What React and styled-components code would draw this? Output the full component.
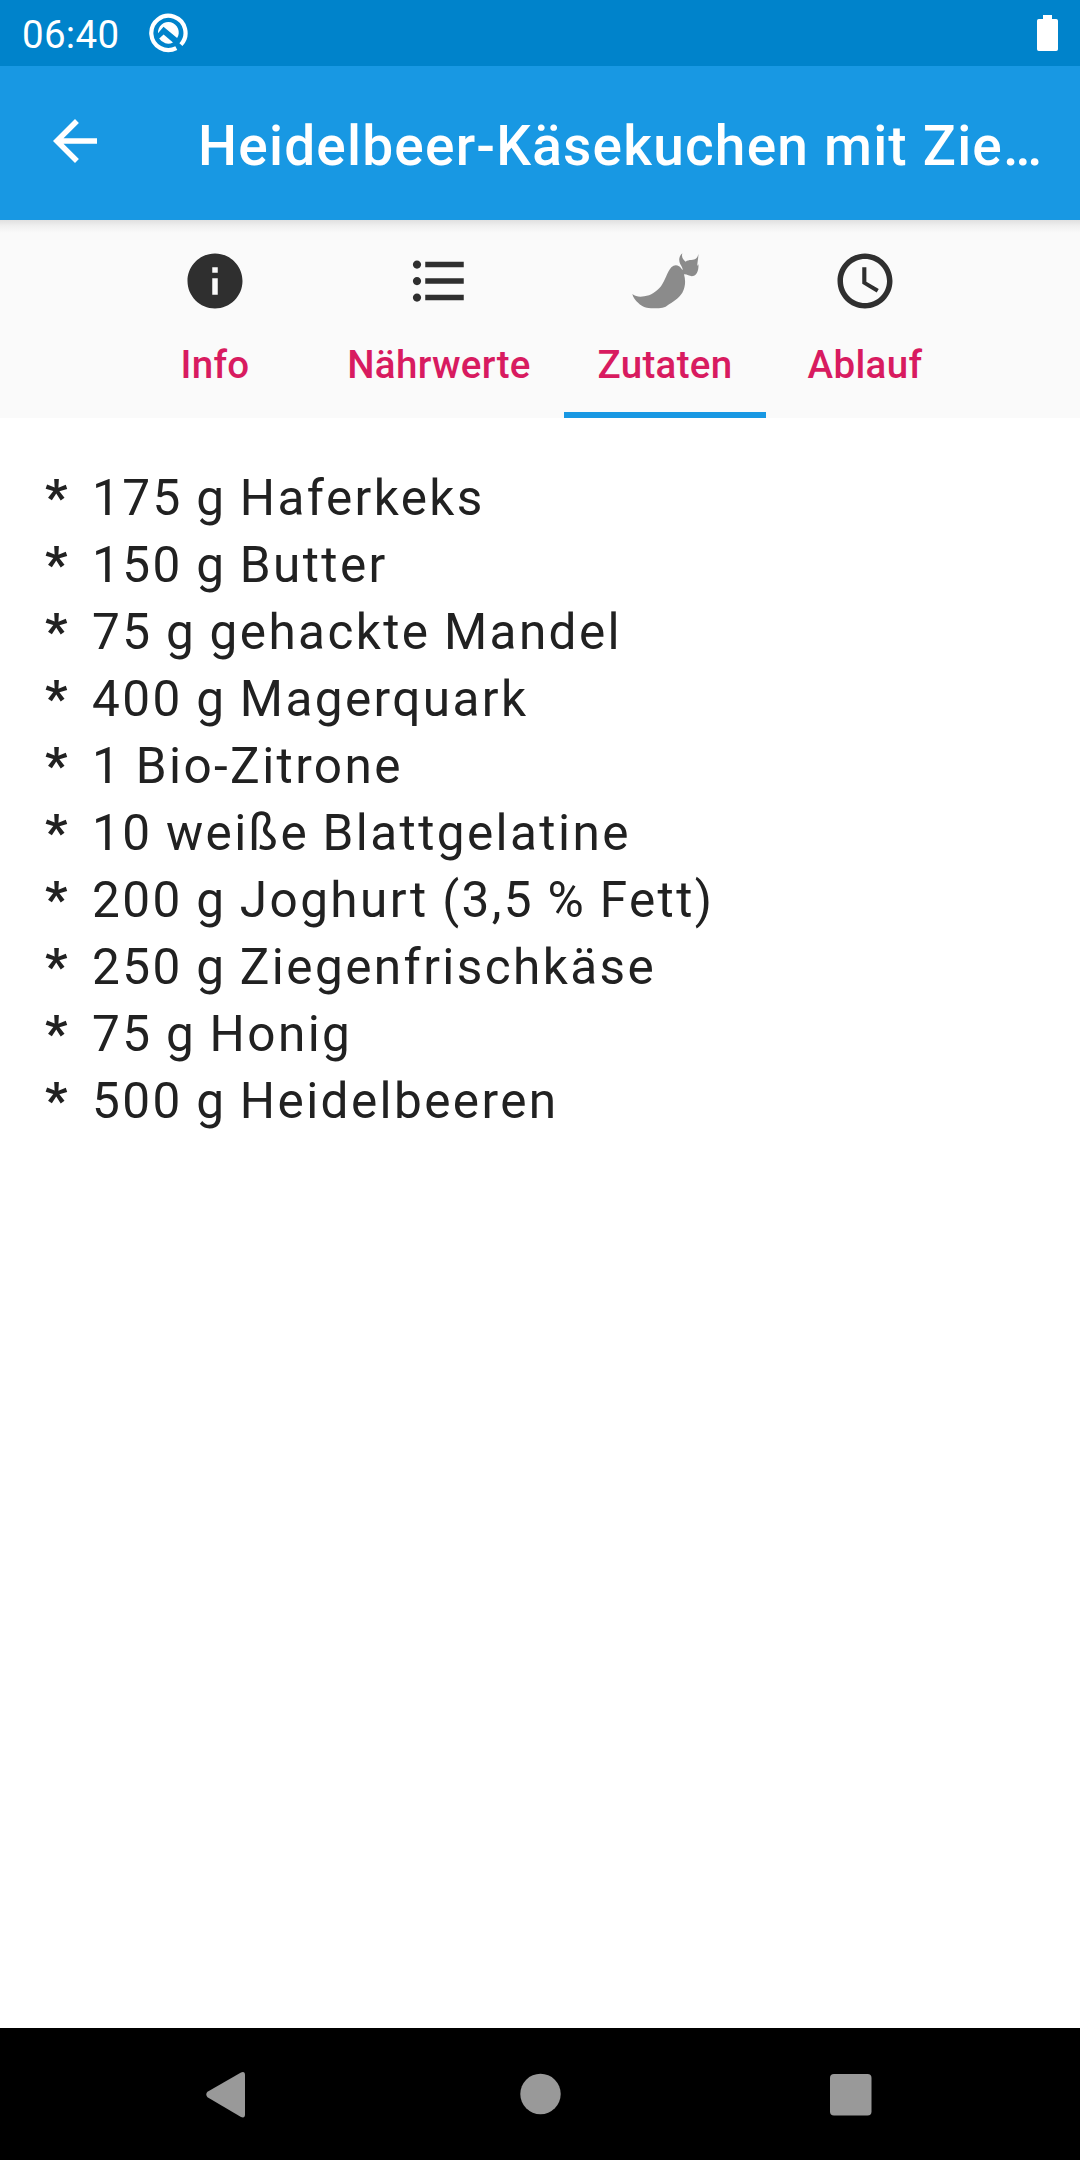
import React from "react";
import styled, { createGlobalStyle } from "styled-components";

const GlobalStyle = createGlobalStyle`
  * { box-sizing: border-box; }
  body { margin: 0; background: #fff; }
`;

const Screen = styled.div`
  display: flex;
  flex-direction: column;
  width: 1080px;
  height: 2160px;
  overflow: hidden;
  background: #fff;
  font-family: Roboto, "Noto Sans", sans-serif;
  color: #212121;
`;

const StatusBar = styled.header`
  display: flex;
  align-items: center;
  height: 66px;
  padding: 0 22px;
  background: #0083cb;
  color: #fff;
`;

const Clock = styled.span`
  width: 96px;
  font-size: 38.5px;
  line-height: 46px;
  letter-spacing: 0.3px;
  padding-top: 3px;
  margin-right: 30px;
  white-space: nowrap;
`;

const StatusSpacer = styled.div`
  flex: 1;
`;

const AppBar = styled.div`
  display: flex;
  align-items: center;
  height: 154px;
  padding: 0 32px 0 42px;
  background: #1898e3;
  color: #fff;
`;

const BackButton = styled.button`
  display: flex;
  padding: 0;
  margin: 0 90px 4px 0;
  border: 0;
  background: none;
  color: inherit;
`;

const Title = styled.h1`
  margin: 0;
  padding-top: 6px;
  font-size: 55px;
  font-weight: 500;
  line-height: 66px;
  letter-spacing: 1.21px;
  white-space: nowrap;
`;

const TabBar = styled.nav`
  display: flex;
  justify-content: center;
  height: 198px;
  background: linear-gradient(#e0e0e0, #f0f0f0 6px, #fafafa 13px);
`;

const Tab = styled.div`
  display: flex;
  flex-direction: column;
  align-items: center;
  width: ${(p) => p.$width}px;
  padding-top: 28px;
  border-bottom: 6px solid ${(p) => (p.$active ? "#1898e3" : "transparent")};
  color: #2f2f2f;
`;

const TabLabel = styled.span`
  margin-top: 28px;
  font-size: 38.5px;
  font-weight: 500;
  line-height: 46px;
  letter-spacing: 0.34px;
  color: #d81b60;
  white-space: nowrap;
`;

const PepperBox = styled.div`
  display: flex;
  align-items: center;
  justify-content: center;
  height: 66px;
  color: #8b8b8b;
`;

const Ingredients = styled.ul`
  flex: 1;
  margin: 0;
  padding: 47px 45px;
  list-style: none;
`;

const Ingredient = styled.li`
  display: flex;
  font-size: 49.5px;
  line-height: 67px;
  letter-spacing: 2.4px;
  word-spacing: -1.2px;
  white-space: nowrap;
`;

const Bullet = styled.span`
  width: 47px;
  font-weight: 700;
`;

const NavBar = styled.footer`
  display: flex;
  align-items: center;
  justify-content: space-between;
  height: 132px;
  padding: 0 196px 0 193px;
  background: #000;
  color: #999;
`;

const Icon = ({ children, size = 66, box = "0 0 24 24" }) => (
  <svg width={size} height={size} viewBox={box} fill="currentColor" display="block">
    {children}
  </svg>
);

const InfoIcon = () => (
  <Icon>
    <path d="M12 2C6.48 2 2 6.48 2 12s4.48 10 10 10 10-4.48 10-10S17.52 2 12 2zm1 15h-2v-6h2v6zm0-8h-2V7h2v2z" />
  </Icon>
);

const ListIcon = () => (
  <Icon>
    <path d="M4 10.5c-.83 0-1.5.67-1.5 1.5s.67 1.5 1.5 1.5 1.5-.67 1.5-1.5-.67-1.5-1.5-1.5zm0-6c-.83 0-1.5.67-1.5 1.5S3.17 7.5 4 7.5 5.5 6.83 5.5 6 4.83 4.5 4 4.5zm0 12c-.83 0-1.5.68-1.5 1.5s.68 1.5 1.5 1.5 1.5-.68 1.5-1.5-.67-1.5-1.5-1.5zM7 19h14v-2H7v2zm0-6h14v-2H7v2zm0-8v2h14V5H7z" />
  </Icon>
);

const PepperIcon = () => (
  <PepperBox>
    <svg width="67" height="56" viewBox="275 113 201 168" fill="currentColor">
      <path d="M276 236C286 244 298 246 312 243C332 241 348 229 362 213C374 197 380 171 393 156C400 149 409 148 416 153C421 156 424 161 427 165C427 158 424 153 420 147C414 136 416 121 426 114C423 125 427 132 436 139C445 132 461 136 468 129C471 126 473 121 474 116C475 127 470 144 471 152C472 150 473 148 474 147C476 162 470 178 461 181C450 186 442 176 431 177C436 194 436 215 426 232C415 250 397 259 380 271C370 279 354 279 338 279C320 279 306 275 294 263C285 255 278 246 276 236Z" />
    </svg>
  </PepperBox>
);

const ClockIcon = () => (
  <Icon>
    <path d="M11.99 2C6.47 2 2 6.48 2 12s4.47 10 9.99 10C17.52 22 22 17.52 22 12S17.52 2 11.99 2zM12 20c-4.42 0-8-3.58-8-8s3.58-8 8-8 8 3.58 8 8-3.58 8-8 8zm.5-13H11v6l5.25 3.15.75-1.23-4.5-2.67V7z" />
  </Icon>
);

const AndroidQIcon = () => (
  <Icon size={40} box="0 0 40 40">
    <path
      d="M32.9 31.6A17.1 17.1 0 1 0 28.3 35.1"
      fill="none"
      stroke="#fff"
      strokeWidth="4.2"
    />
    <path d="M10 20.2A10.4 10.4 0 1 1 29.1 25.1L15.5 13.8Z" />
    <path d="M11.2 25.6L15.6 21.4L25 29.4A10.4 10.4 0 0 1 11.2 25.6Z" />
  </Icon>
);

const BatteryIcon = () => (
  <svg width="21" height="36" viewBox="0 0 21 36" fill="#fff">
    <path d="M6 0h9v4h4.2Q21 4 21 5.8v28.4Q21 36 19.2 36H1.8Q0 36 0 34.2V5.8Q0 4 1.8 4H6Z" />
  </svg>
);

const tabs = [
  { label: "Info", width: 198, icon: InfoIcon },
  { label: "Nährwerte", width: 250, icon: ListIcon },
  { label: "Zutaten", width: 202, icon: PepperIcon, active: true },
  { label: "Ablauf", width: 198, icon: ClockIcon },
];

const ingredients = [
  "175 g Haferkeks",
  "150 g Butter",
  "75 g gehackte Mandel",
  "400 g Magerquark",
  "1 Bio-Zitrone",
  "10 weiße Blattgelatine",
  "200 g Joghurt (3,5 % Fett)",
  "250 g Ziegenfrischkäse",
  "75 g Honig",
  "500 g Heidelbeeren",
];

export default function App() {
  return (
    <Screen>
      <GlobalStyle />
      <StatusBar>
        <Clock>06:40</Clock>
        <AndroidQIcon />
        <StatusSpacer />
        <BatteryIcon />
      </StatusBar>
      <AppBar>
        <BackButton aria-label="Zurück">
          <Icon>
            <path d="M20 11H7.83l5.59-5.59L12 4l-8 8 8 8 1.41-1.41L7.83 13H20v-2z" />
          </Icon>
        </BackButton>
        <Title>Heidelbeer-Käsekuchen mit Zie…</Title>
      </AppBar>
      <TabBar>
        {tabs.map(({ label, width, icon: TabIcon, active }) => (
          <Tab key={label} $width={width} $active={active}>
            <TabIcon />
            <TabLabel>{label}</TabLabel>
          </Tab>
        ))}
      </TabBar>
      <Ingredients>
        {ingredients.map((item) => (
          <Ingredient key={item}>
            <Bullet>*</Bullet>
            {item}
          </Ingredient>
        ))}
      </Ingredients>
      <NavBar>
        <svg width="66" height="66" viewBox="0 0 66 66" fill="currentColor">
          <path d="M14.5 30.8L48 11.5Q52 10 52 14V53.5Q52 57.5 48 56L14.5 36.2Q12 33.5 14.5 30.8Z" />
        </svg>
        <svg width="66" height="66" viewBox="0 0 66 66" fill="currentColor">
          <circle cx="34.5" cy="33" r="20.2" />
        </svg>
        <svg width="66" height="66" viewBox="0 0 66 66" fill="currentColor">
          <rect x="12" y="13" width="41.5" height="41.5" rx="4" />
        </svg>
      </NavBar>
    </Screen>
  );
}
